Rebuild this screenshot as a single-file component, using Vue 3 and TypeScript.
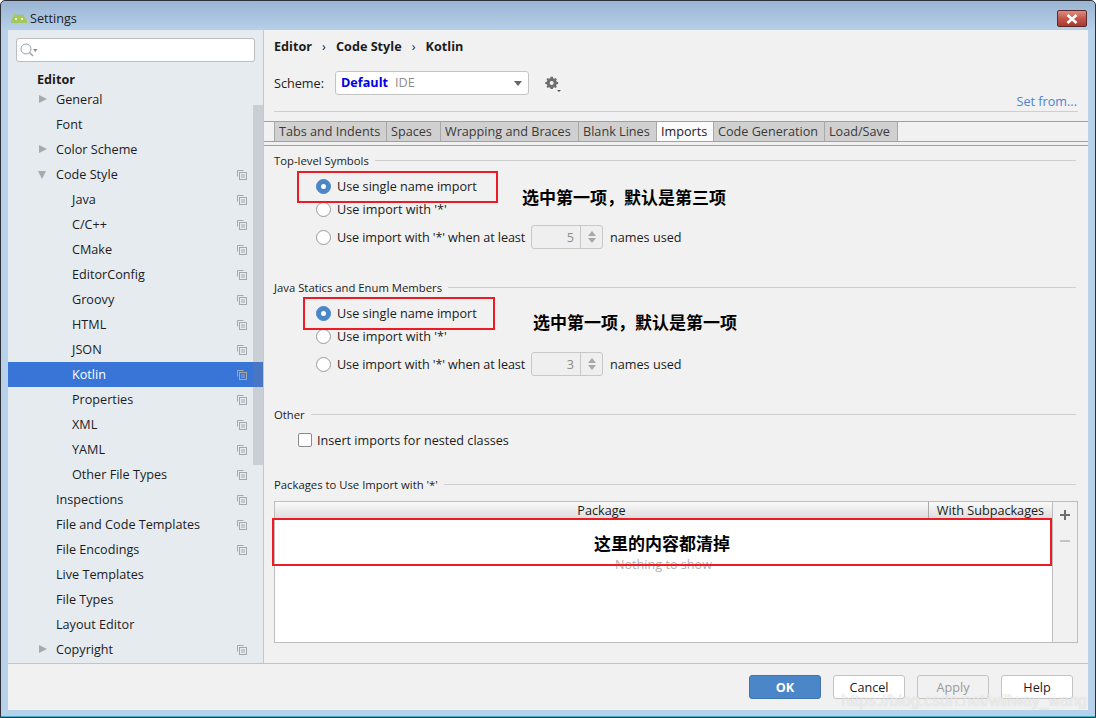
<template>
  <div class="window">
    <div class="titlebar">
      <svg class="droid" width="18" height="10" viewBox="0 0 18 10">
        <path d="M1 10 C1 4.500 4.500 1.500 9 1.500 C13.500 1.500 17 4.500 17 10 Z" fill="#a4c85e" />
        <path d="M3.500 0 L5.500 3 M14.500 0 L12.500 3" stroke="#a4c85e" stroke-width="1" />
        <rect x="5" y="5" width="2" height="2" fill="#e8f2d0" />
        <rect x="11" y="5" width="2" height="2" fill="#e8f2d0" />
      </svg>
      <span class="title">Settings</span>
      <button class="close">
        <svg width="14" height="10" viewBox="0 0 14 10">
          <path d="M2.500 1 L11.500 9 M11.500 1 L2.500 9" stroke="#fff" stroke-width="2.600" />
        </svg>
      </button>
    </div>

    <div class="body">
      <div class="main">
        <aside class="sidebar">
          <div class="search">
            <svg width="22" height="16" viewBox="0 0 22 16">
              <circle cx="6" cy="7" r="5" fill="none" stroke="#9aa0a6" stroke-width="1" />
              <path d="M9.500 10.500 L13 14" stroke="#9aa0a6" stroke-width="1.400" />
              <path d="M13 7 H17.500 L15.200 10 Z" fill="#8a8f94" />
            </svg>
          </div>
          <div class="group-head">Editor</div>
          <div
            v-for="item in navItems"
            :key="item.label"
            class="nav-row"
            :class="{ selected: item.label === 'Kotlin' }"
          >
            <span class="arrow-slot" :class="{ child: item.level === 2 }">
              <span v-if="item.arrow === 'right'" class="arrow-right"></span>
              <span v-if="item.arrow === 'down'" class="arrow-down"></span>
            </span>
            <span class="nav-label">{{ item.label }}</span>
            <svg v-if="item.copy" class="copy-icon" width="10" height="10" viewBox="0 0 10 10">
              <path d="M0.500 6.500 V0.500 H6.500" fill="none" stroke="#a3a9ae" />
              <rect x="2.500" y="2.500" width="7" height="7" fill="none" stroke="#a3a9ae" />
              <path d="M4 5 H8 M4 7 H8" stroke="#a3a9ae" />
            </svg>
          </div>
          <div class="scroll-thumb"></div>
        </aside>

        <section class="content">
          <div class="breadcrumb">
            <span>Editor</span><i>›</i><span>Code Style</span><i>›</i><span>Kotlin</span>
          </div>
          <div class="scheme-row">
            <span class="scheme-label">Scheme:</span>
            <div class="scheme-select">
              <b>Default</b><span class="ide">IDE</span>
              <span class="select-caret"></span>
            </div>
            <svg class="gear" width="18" height="18" viewBox="0 0 18 18">
              <path
                d="M6 1 H9 L9.500 3 L11 3.700 L12.800 2.700 L14.300 4.200 L13.300 6 L14 7.500 L16 8 V10.500 L14 11 L13.300 12.500 L14.300 14.300 L12.800 15.800 L11 14.800 L9.500 15.500 L9 17 H6 L5.500 15.500 L4 14.800 L2.200 15.800 L0.700 14.300 L1.700 12.500 L1 11 L-1 10.500 V8 L1 7.500 L1.700 6 L0.700 4.200 L2.200 2.700 L4 3.700 L5.500 3 Z"
                transform="translate(2 1) scale(0.76)"
                fill="#6e6e6e"
              />
              <circle cx="7.700" cy="8" r="2" fill="#f1f1f1" />
              <path d="M13 15 H17 L15 17 Z" fill="#555" />
            </svg>
          </div>
          <div class="set-from">Set from...</div>

          <div class="tabs">
            <span
              v-for="tab in tabs"
              :key="tab.label"
              class="tab"
              :class="{ active: tab.label === 'Imports' }"
              :style="{ width: tab.width + 'px' }"
            >{{ tab.label }}</span>
          </div>

          <div class="pane">
            <fieldset-title label="Top-level Symbols" />
            <div class="radio-group">
              <label class="radio-row r1"><span class="radio on"></span>Use single name import</label>
              <label class="radio-row r2"><span class="radio"></span>Use import with '*'</label>
              <label class="radio-row r3">
                <span class="radio"></span><span class="at-least">Use import with '*' when at least</span>
                <span class="spinner"><em>5</em><span class="spin-btn"><u class="up"></u><u class="dn"></u></span></span>
                names used
              </label>
            </div>

            <fieldset-title label="Java Statics and Enum Members" class="sec-java" />
            <div class="radio-group">
              <label class="radio-row r1"><span class="radio on"></span>Use single name import</label>
              <label class="radio-row r2"><span class="radio"></span>Use import with '*'</label>
              <label class="radio-row r3">
                <span class="radio"></span><span class="at-least">Use import with '*' when at least</span>
                <span class="spinner"><em>3</em><span class="spin-btn"><u class="up"></u><u class="dn"></u></span></span>
                names used
              </label>
            </div>

            <fieldset-title label="Other" class="sec-other" />
            <label class="check-row"><span class="check"></span>Insert imports for nested classes</label>

            <fieldset-title label="Packages to Use Import with '*'" class="sec-pkg" />
            <div class="table-wrap">
              <div class="table">
                <div class="thead">
                  <span class="th-pkg">Package</span>
                  <span class="th-sub">With Subpackages</span>
                </div>
                <div class="tbody"><span class="empty">Nothing to show</span></div>
              </div>
              <div class="table-tools">
                <svg width="12" height="12" viewBox="0 0 12 12">
                  <path d="M6 1 V11 M1 6 H11" stroke="#6e6e6e" stroke-width="2" />
                </svg>
                <svg width="12" height="12" viewBox="0 0 12 12">
                  <path d="M1 6 H11" stroke="#c4c4c4" stroke-width="2" />
                </svg>
              </div>
            </div>
          </div>
        </section>
      </div>

      <footer class="footer">
        <button class="btn primary">OK</button>
        <button class="btn">Cancel</button>
        <button class="btn disabled">Apply</button>
        <button class="btn">Help</button>
      </footer>

      <!-- screenshot annotations -->
      <div class="mark m1"></div>
      <div class="mark m2"></div>
      <div class="mark m3"></div>
      <div class="note n1">选中第一项，默认是第三项</div>
      <div class="note n2">选中第一项，默认是第一项</div>
      <div class="note n3">这里的内容都清掉</div>
    </div>

    <div class="watermark">https://blog.csdn.net/willway_wang</div>
  </div>
</template>

<script setup lang="ts">
import { h } from 'vue';

interface NavItem {
  label: string;
  level: 1 | 2;
  arrow?: 'right' | 'down';
  copy?: boolean;
}

// Small section heading with the rule running to the right
const FieldsetTitle = (props: { label: string }) =>
  h('div', { class: 'fs-title' }, [h('span', props.label), h('i')]);
FieldsetTitle.props = ['label'];

const navItems: NavItem[] = [
  { label: 'General', level: 1, arrow: 'right' },
  { label: 'Font', level: 1 },
  { label: 'Color Scheme', level: 1, arrow: 'right' },
  { label: 'Code Style', level: 1, arrow: 'down', copy: true },
  { label: 'Java', level: 2, copy: true },
  { label: 'C/C++', level: 2, copy: true },
  { label: 'CMake', level: 2, copy: true },
  { label: 'EditorConfig', level: 2, copy: true },
  { label: 'Groovy', level: 2, copy: true },
  { label: 'HTML', level: 2, copy: true },
  { label: 'JSON', level: 2, copy: true },
  { label: 'Kotlin', level: 2, copy: true },
  { label: 'Properties', level: 2, copy: true },
  { label: 'XML', level: 2, copy: true },
  { label: 'YAML', level: 2, copy: true },
  { label: 'Other File Types', level: 2, copy: true },
  { label: 'Inspections', level: 1, copy: true },
  { label: 'File and Code Templates', level: 1, copy: true },
  { label: 'File Encodings', level: 1, copy: true },
  { label: 'Live Templates', level: 1 },
  { label: 'File Types', level: 1 },
  { label: 'Layout Editor', level: 1 },
  { label: 'Copyright', level: 1, arrow: 'right', copy: true },
];

const tabs = [
  { label: 'Tabs and Indents', width: 112 },
  { label: 'Spaces', width: 54 },
  { label: 'Wrapping and Braces', width: 138 },
  { label: 'Blank Lines', width: 78 },
  { label: 'Imports', width: 57 },
  { label: 'Code Generation', width: 111 },
  { label: 'Load/Save', width: 74 },
];
</script>

<style>
html,
body {
  margin: 0;
  background: #fff;
}
</style>

<style scoped>
.window {
  position: relative;
  width: 1096px;
  height: 718px;
  box-sizing: border-box;
  padding: 0 7px 7px;
  overflow: hidden;
  background: linear-gradient(180deg, #99b5d3 0, #b8d1ea 30px);
  border: 1px solid #2e3236;
  border-radius: 5px 5px 0 0;
  box-shadow: inset 0 -1px 0 #37b5d0;
  font-family: "Open Sans", "Noto Sans", "Noto Sans CJK SC", sans-serif;
  font-size: 12.65px;
  color: #1c1c1c;
  display: flex;
  flex-direction: column;
}

.titlebar {
  height: 29px;
  flex: none;
  display: flex;
  align-items: center;
  padding-top: 4px;
  box-sizing: border-box;
}
.droid {
  margin: 0 2px 0 2px;
}
.title {
  color: #222;
}
.close {
  margin-left: auto;
  align-self: flex-start;
  margin-top: 5px;
  margin-right: 1px;
  width: 30px;
  height: 17px;
  padding: 0;
  border: 1px solid #5b2a28;
  border-radius: 2px;
  background: linear-gradient(180deg, #d98e84 0, #c4574c 50%, #a83a30 100%);
  display: flex;
  align-items: center;
  justify-content: center;
}

.body {
  position: relative;
  flex: 1;
  min-height: 0;
  display: flex;
  flex-direction: column;
  background: #f1f1f1;
}

.main {
  flex: 1;
  min-height: 0;
  display: flex;
  border-bottom: 1px solid #c4c4c4;
}

.sidebar {
  position: relative;
  width: 256px;
  flex: none;
  box-sizing: border-box;
  border-right: 1px solid #c4c8cc;
  background: #e6ebf0;
  padding-top: 8px;
  overflow: hidden;
}
.search {
  margin: 0 8px;
  width: 239px;
  height: 24px;
  box-sizing: border-box;
  border: 1px solid #bdbdbd;
  border-radius: 3px;
  background: #fff;
  display: flex;
  align-items: center;
  padding-left: 3px;
}
.group-head {
  height: 25px;
  line-height: 34px;
  padding-left: 29px;
  font-weight: 700;
}
.nav-row {
  height: 25px;
  box-sizing: border-box;
  padding-bottom: 1px;
  display: flex;
  align-items: center;
  position: relative;
}
.nav-row.selected {
  background: #3875d7;
  color: #fff;
}
.arrow-slot {
  width: 48px;
  flex: none;
  position: relative;
  height: 25px;
}
.arrow-slot.child {
  width: 64px;
}
.arrow-right {
  position: absolute;
  left: 31px;
  top: 8px;
  border-left: 8px solid #a9a9a9;
  border-top: 4.500px solid transparent;
  border-bottom: 4.500px solid transparent;
}
.arrow-down {
  position: absolute;
  left: 30px;
  top: 9px;
  border-top: 8px solid #a9a9a9;
  border-left: 4.500px solid transparent;
  border-right: 4.500px solid transparent;
}
.copy-icon {
  position: absolute;
  left: 229px;
  top: 8px;
}
.scroll-thumb {
  position: absolute;
  right: 0;
  top: 75px;
  width: 10px;
  height: 360px;
  background: rgba(120, 125, 130, 0.25);
}

.content {
  flex: 1;
  min-width: 0;
}
.breadcrumb {
  height: 16px;
  margin: 8px 0 0 10px;
  line-height: 16px;
  font-weight: 700;
  display: flex;
}
.breadcrumb i {
  font-style: normal;
  font-weight: 400;
  width: 24px;
  text-align: center;
}
.scheme-row {
  display: flex;
  align-items: center;
  height: 24px;
  margin: 17px 0 0 10px;
}
.scheme-label {
  width: 61px;
}
.scheme-select {
  position: relative;
  width: 194px;
  height: 24px;
  box-sizing: border-box;
  border: 1px solid #c4c4c4;
  border-radius: 3px;
  background: #fff;
  padding-left: 5px;
  line-height: 21px;
}
.scheme-select b {
  color: #0000e6;
}
.ide {
  color: #8c8c8c;
  margin-left: 7px;
}
.select-caret {
  position: absolute;
  right: 6px;
  top: 9px;
  border-top: 5px solid #666;
  border-left: 4.500px solid transparent;
  border-right: 4.500px solid transparent;
}
.gear {
  margin: 2px 0 0 15px;
}
.set-from {
  height: 16px;
  margin-top: -2px;
  padding-right: 11px;
  text-align: right;
  color: #4f81d6;
  line-height: 16px;
}
.tabs {
  margin-top: 12px;
  height: 19px;
  padding-left: 10px;
  display: flex;
  border-top: 1px solid #a0a0a0;
  border-bottom: 1px solid #a0a0a0;
  position: relative;
}
.tabs::before {
  content: "";
  position: absolute;
  left: 10px;
  right: 10px;
  top: -11px;
  height: 1px;
  background: #cfcfcf;
}
.tab {
  box-sizing: border-box;
  height: 19px;
  padding-left: 4px;
  line-height: 19px;
  background: #d0d0d0;
  border-left: 1px solid #a8a8a8;
  color: #3a3a3a;
  white-space: nowrap;
}
.tab:last-child {
  border-right: 1px solid #a8a8a8;
}
.tab.active {
  background: #fbfbfb;
  color: #1c1c1c;
}
.pane {
  border-top: 1px solid #a0a0a0;
  margin-top: 3px;
  padding: 0 10px;
}

:deep(.fs-title) {
  display: flex;
  align-items: center;
  height: 16px;
  margin-top: 6px;
  margin-right: 2px;
  font-size: 11.3px;
}
:deep(.fs-title i) {
  flex: 1;
  height: 1px;
  margin-left: 6px;
  background: #cfcfcf;
}
.sec-java {
  margin-top: 30px;
}
.sec-other {
  margin-top: 30px;
}
.sec-pkg {
  margin-top: 26px;
}

.radio-group {
  margin-left: 42px;
}
.radio-row {
  display: flex;
  align-items: center;
  height: 24px;
}
.radio-row.r1 {
  margin-top: 6px;
}
.radio-row.r2 {
  height: 22px;
}
.radio-row.r3 {
  height: 24px;
  margin-top: 5px;
}
.at-least {
  width: 187px;
  white-space: nowrap;
  letter-spacing: -0.1px;
}
.radio {
  width: 15px;
  height: 15px;
  box-sizing: border-box;
  border: 1px solid #9a9a9a;
  border-radius: 50%;
  background: #fff;
  margin-right: 6px;
  flex: none;
  position: relative;
}
.radio.on {
  border-color: #4a86c8;
  background: #4a86c8;
}
.radio.on::after {
  content: "";
  position: absolute;
  left: 4px;
  top: 4px;
  width: 5px;
  height: 5px;
  border-radius: 50%;
  background: #fff;
}
.spinner {
  margin: 0 7px;
  width: 72px;
  height: 24px;
  box-sizing: border-box;
  border: 1px solid #c8c8c8;
  border-radius: 3px;
  display: flex;
  background: #efefef;
}
.spinner em {
  flex: 1;
  font-style: normal;
  text-align: right;
  padding-right: 6px;
  color: #8c8c8c;
  line-height: 23px;
}
.spin-btn {
  width: 21px;
  border-left: 1px solid #c8c8c8;
  display: flex;
  flex-direction: column;
  align-items: center;
  justify-content: center;
  gap: 2px;
}
.spin-btn u {
  border-left: 4.500px solid transparent;
  border-right: 4.500px solid transparent;
}
.spin-btn .up {
  border-bottom: 5px solid #a8a8a8;
}
.spin-btn .dn {
  border-top: 5px solid #a8a8a8;
}

.check-row {
  display: flex;
  align-items: center;
  height: 20px;
  margin: 8px 0 0 24px;
}
.check {
  width: 14px;
  height: 14px;
  box-sizing: border-box;
  border: 1px solid #8a8a8a;
  border-radius: 2px;
  background: #fff;
  margin-right: 5px;
}

.table-wrap {
  display: flex;
  height: 142px;
  margin-top: 9px;
  box-sizing: border-box;
  border: 1px solid #bdbdbd;
}
.table {
  flex: 1;
  min-width: 0;
  border-right: 1px solid #bdbdbd;
  display: flex;
  flex-direction: column;
}
.thead {
  height: 16px;
  flex: none;
  display: flex;
  background: linear-gradient(180deg, #fafafa, #dedede);
  line-height: 16px;
}
.th-pkg {
  flex: 1;
  text-align: center;
}
.th-sub {
  width: 124px;
  box-sizing: border-box;
  border-left: 1px solid #aaa;
  text-align: center;
}
.tbody {
  flex: 1;
  background: #fff;
  text-align: center;
  padding-top: 37px;
}
.empty {
  color: #b0b0b0;
}
.table-tools {
  width: 24px;
  flex: none;
  display: flex;
  flex-direction: column;
  align-items: center;
  gap: 14px;
  padding-top: 7px;
}

.footer {
  height: 46px;
  flex: none;
  display: flex;
  justify-content: flex-end;
  align-items: flex-start;
  gap: 12px;
  padding: 11px 15px 0 0;
  box-sizing: border-box;
}
.btn {
  width: 72px;
  height: 24px;
  padding: 0;
  box-sizing: border-box;
  border: 1px solid #c4c4c4;
  border-radius: 3px;
  background: #fff;
  font: inherit;
  color: #1c1c1c;
}
.btn.primary {
  background: #4a86c8;
  border-color: #3f74b0;
  color: #fff;
  font-weight: 700;
}
.btn.disabled {
  background: #f1f1f1;
  color: #9a9a9a;
}

.mark {
  position: absolute;
  box-sizing: border-box;
  border: 2px solid #ed1c24;
  pointer-events: none;
}
.m1 {
  left: 289px;
  top: 141px;
  width: 201px;
  height: 32px;
}
.m2 {
  left: 295px;
  top: 267px;
  width: 192px;
  height: 33px;
}
.m3 {
  left: 264px;
  top: 488px;
  width: 780px;
  height: 48px;
}
.note {
  position: absolute;
  font-family: "Noto Sans CJK SC", sans-serif;
  font-size: 17px;
  font-weight: 700;
  color: #000;
  line-height: 20px;
  white-space: nowrap;
}
.n1 {
  left: 514px;
  top: 157px;
}
.n2 {
  left: 525px;
  top: 282px;
}
.n3 {
  left: 586px;
  top: 503px;
}
.watermark {
  position: absolute;
  right: 8px;
  bottom: 7px;
  font-family: "Liberation Sans", sans-serif;
  font-size: 16px;
  color: rgba(255, 255, 255, 0.62);
  text-shadow: 0 0 1px rgba(120, 120, 120, 0.35);
}
</style>
